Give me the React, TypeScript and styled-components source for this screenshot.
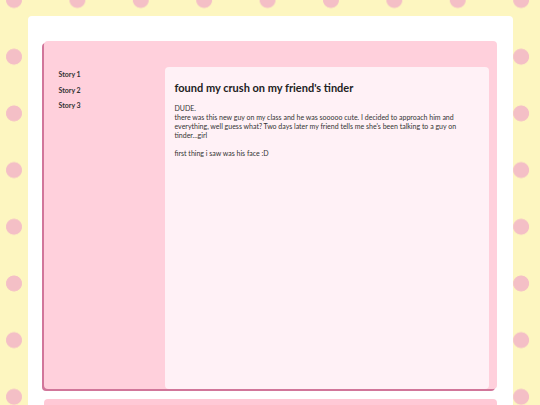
import React from "react";
import styled, { createGlobalStyle } from "styled-components";

const GlobalStyle = createGlobalStyle`
  html, body {
    margin: 0;
    padding: 0;
    overflow: hidden;
  }
  body {
    width: 540px;
    height: 405px;
    background-color: #fdf6c0;
    background-image: radial-gradient(circle at center, #f4bfc6 7.6px, transparent 8.3px);
    background-size: 63.4px 56.7px;
    background-position: -17.7px -28.35px;
    font-family: Lato, "Noto Sans", sans-serif;
    color: #333;
  }
`;

const Page = styled.div`
  box-sizing: border-box;
  width: 485px;
  height: 389px;
  overflow: hidden;
  margin: 16px auto 0;
  padding-top: 25px;
  background: #ffffff;
  border-radius: 4px 4px 0 0;
  display: flex;
  flex-direction: column;
  align-items: center;
  gap: 10px;
`;

const StoryBox = styled.div`
  width: 453px;
  height: 348px;
  background: #ffd0dc;
  border-radius: 4px;
  box-shadow: -2px 2px 0 #d1769a;
  display: flex;
  flex-shrink: 0;
`;

const Sidebar = styled.nav`
  width: 106px;
  padding: 29px 0 0 15px;
  display: flex;
  flex-direction: column;
  gap: 7.5px;
`;

const SideLink = styled.div`
  font-size: 7px;
  font-weight: 700;
  line-height: 8px;
  color: #333;
`;

const Card = styled.article`
  flex: 1;
  margin: 26px 8px 0 0;
  background: #fff1f6;
  border-radius: 4px;
  padding: 13px 10px 0 10px;
`;

const Title = styled.h1`
  margin: 0 0 8px;
  font-size: 11px;
  font-weight: 700;
  line-height: 16px;
  color: #222;
`;

const Body = styled.p`
  margin: 0;
  font-size: 7px;
  line-height: 9px;
  color: #333;
  white-space: pre-line;
`;

const NextBox = styled.div`
  width: 453px;
  height: 20px;
  background: #ffc9d6;
  border-radius: 4px;
  flex-shrink: 0;
`;

export default function App() {
  return (
    <>
      <GlobalStyle />
      <Page>
        <StoryBox>
          <Sidebar>
            <SideLink>Story 1</SideLink>
            <SideLink>Story 2</SideLink>
            <SideLink>Story 3</SideLink>
          </Sidebar>
          <Card>
            <Title>found my crush on my friend's tinder</Title>
            <Body>
              {"DUDE.\nthere was this new guy on my class and he was sooooo cute. I decided to approach him and everything, well guess what? Two days later my friend tells me she's been talking to a guy on tinder...girl\n\nfirst thing i saw was his face :D"}
            </Body>
          </Card>
        </StoryBox>
        <NextBox />
      </Page>
    </>
  );
}
